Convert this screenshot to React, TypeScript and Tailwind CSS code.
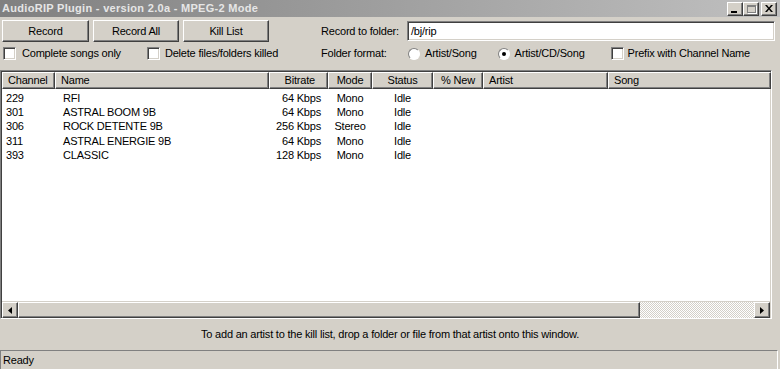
import React from "react";

const raised =
  "border border-t-white border-l-white border-r-[#404040] border-b-[#404040] shadow-[inset_-1px_-1px_0_#808080,inset_1px_1px_0_#d4d0c8]";
const sunken =
  "border border-t-[#808080] border-l-[#808080] border-r-white border-b-white shadow-[inset_1px_1px_0_#404040,inset_-1px_-1px_0_#d4d0c8]";

function Btn({ label, w }: { label: string; w: string }) {
  return (
    <div className={`${w} h-[22px] bg-[#d4d0c8] ${raised} flex items-center justify-center text-black`}>
      {label}
    </div>
  );
}

function Check({ label, gap = "ml-[5px]" }: { label: string; gap?: string }) {
  return (
    <div className="flex items-center">
      <div className={`w-[13px] h-[13px] bg-white ${sunken}`} />
      <span className={gap}>{label}</span>
    </div>
  );
}

function Radio({ label, on }: { label: string; on?: boolean }) {
  return (
    <div className="flex items-center">
      <div className="relative w-[12px] h-[12px] rounded-full bg-white border border-t-[#808080] border-l-[#808080] border-r-white border-b-white flex items-center justify-center">
        {on && <div className="w-[4px] h-[4px] rounded-full bg-black" />}
      </div>
      <span className="ml-[5px]">{label}</span>
    </div>
  );
}

type Col = { name: string; w: string; align: "l" | "c" | "r" };
const cols: Col[] = [
  { name: "Channel", w: "w-[53px]", align: "l" },
  { name: "Name", w: "w-[214px]", align: "l" },
  { name: "Bitrate", w: "w-[59px]", align: "r" },
  { name: "Mode", w: "w-[44px]", align: "c" },
  { name: "Status", w: "w-[61px]", align: "c" },
  { name: "% New", w: "w-[50px]", align: "c" },
  { name: "Artist", w: "w-[125px]", align: "l" },
  { name: "Song", w: "w-[163px]", align: "l" },
];

const rows = [
  ["229", "RFI", "64 Kbps", "Mono", "Idle"],
  ["301", "ASTRAL BOOM 9B", "64 Kbps", "Mono", "Idle"],
  ["306", "ROCK DETENTE 9B", "256 Kbps", "Stereo", "Idle"],
  ["311", "ASTRAL ENERGIE 9B", "64 Kbps", "Mono", "Idle"],
  ["393", "CLASSIC", "128 Kbps", "Mono", "Idle"],
];

function alignCls(a: "l" | "c" | "r") {
  return a === "l" ? "justify-start" : a === "c" ? "justify-center" : "justify-end";
}

export default function App() {
  return (
    <div
      className="w-[780px] h-[369px] bg-[#d4d0c8] flex flex-col text-[11px] tracking-[-0.2px] text-black overflow-hidden"
      style={{ fontFamily: '"Liberation Sans", Arial, sans-serif' }}
    >
      {/* Title bar */}
      <div className="h-[17px] flex items-center bg-gradient-to-r from-[#808080] to-[#c0c0c0] pl-[2px] pr-[3px]">
        <span className="font-bold text-[#e6e6e6] text-[11px] leading-none tracking-[0.3px]">
          AudioRIP Plugin - version 2.0a - MPEG-2 Mode
        </span>
        <div className="ml-auto flex items-center">
          <div className={`w-[16px] h-[14px] bg-[#d4d0c8] ${raised} relative`}>
            <div className="absolute left-[3px] bottom-[2px] w-[6px] h-[2px] bg-black" />
          </div>
          <div className={`w-[16px] h-[14px] bg-[#d4d0c8] ${raised} relative`}>
            <div className="absolute left-[3px] top-[2px] w-[9px] h-[8px] border border-[#808080] border-t-2 shadow-[1px_1px_0_#fff]" />
          </div>
          <div className={`ml-[2px] w-[16px] h-[14px] bg-[#d4d0c8] ${raised} flex items-center justify-center`}>
            <svg width="8" height="7" viewBox="0 0 8 7">
              <path d="M0 0h2l2 2.5L6 0h2L5 3.5 8 7H6L4 4.5 2 7H0l3-3.5z" fill="#000" />
            </svg>
          </div>
        </div>
      </div>

      {/* Controls */}
      <div className="flex mt-[3px]">
        <div className="w-[321px] flex flex-col pl-[2px]">
          <div className="flex gap-[4px]">
            <Btn label="Record" w="w-[87px]" />
            <Btn label="Record All" w="w-[86px]" />
            <Btn label="Kill List" w="w-[86px]" />
          </div>
          <div className="flex items-center mt-[4px] h-[15px] pl-[1px]">
            <Check label="Complete songs only" gap="ml-[6px]" />
            <div className="ml-[26px]">
              <Check label="Delete files/folders killed" />
            </div>
          </div>
        </div>
        <div className="flex-1 flex flex-col pr-[5px]">
          <div className="flex items-center h-[22px]">
            <span className="w-[86px]">Record to folder:</span>
            <div className={`flex-1 h-[20px] bg-white ${sunken} flex items-center pl-[3px]`}>/bj/rip</div>
          </div>
          <div className="flex items-center mt-[4px] h-[15px]">
            <span className="w-[87px]">Folder format:</span>
            <Radio label="Artist/Song" />
            <div className="ml-[21px]">
              <Radio label="Artist/CD/Song" on />
            </div>
            <div className="ml-[26px]">
              <Check label="Prefix with Channel Name" gap="ml-[4px]" />
            </div>
          </div>
        </div>
      </div>

      {/* List view */}
      <div className={`mt-[9px] ml-0 w-[772px] h-[249px] bg-white ${sunken} flex flex-col`}>
        <div className="flex h-[17px] shrink-0 ml-[1px] mt-[1px]">
          {cols.map((c) => (
            <div
              key={c.name}
              className={`${c.w} shrink-0 h-[17px] bg-[#d4d0c8] ${raised} flex items-center ${alignCls(
                c.align
              )} ${c.align === "l" ? "pl-[5px]" : c.align === "r" ? "pr-[12px]" : ""}`}
            >
              {c.name}
            </div>
          ))}
        </div>
        <div className="flex-1 flex flex-col pt-[2px] ml-[1px]">
          {rows.map((r) => (
            <div key={r[0]} className="flex h-[14.25px] items-center">
              {cols.map((c, i) => (
                <div
                  key={c.name}
                  className={`${c.w} shrink-0 flex ${alignCls(c.align)} ${
                    c.align === "l" ? "pl-[4px]" : c.align === "r" ? "pr-[7px]" : ""
                  } ${i === 1 ? "pl-[8px]" : ""}`}
                >
                  {r[i] ?? ""}
                </div>
              ))}
            </div>
          ))}
        </div>
        {/* horizontal scrollbar */}
        <div className="h-[16px] flex shrink-0 ml-[1px] mr-[1px] mb-[1px] border-t border-[#d4d0c8]">
          <div className={`w-[16px] h-[16px] bg-[#d4d0c8] ${raised} flex items-center justify-center`}>
            <svg width="4" height="7" viewBox="0 0 4 7">
              <path d="M4 0v7L0 3.5z" fill="#000" />
            </svg>
          </div>
          <div className={`w-[622px] h-[16px] bg-[#d4d0c8] ${raised}`} />
          <div className="flex-1 h-[16px] bg-[repeating-conic-gradient(#ffffff_0_25%,#d4d0c8_0_50%)] bg-[length:2px_2px]" />
          <div className={`w-[16px] h-[16px] bg-[#d4d0c8] ${raised} flex items-center justify-center`}>
            <svg width="4" height="7" viewBox="0 0 4 7">
              <path d="M0 0v7L4 3.5z" fill="#000" />
            </svg>
          </div>
        </div>
      </div>

      {/* Message */}
      <div className="h-[31px] flex items-center justify-center">
        To add an artist to the kill list, drop a folder or file from that artist onto this window.
      </div>

      {/* Status bar */}
      <div className="flex-1 mr-[2px] border-t border-l border-[#808080] border-r border-r-white flex items-center pl-[2px] pt-[1px]">
        Ready
      </div>
    </div>
  );
}
